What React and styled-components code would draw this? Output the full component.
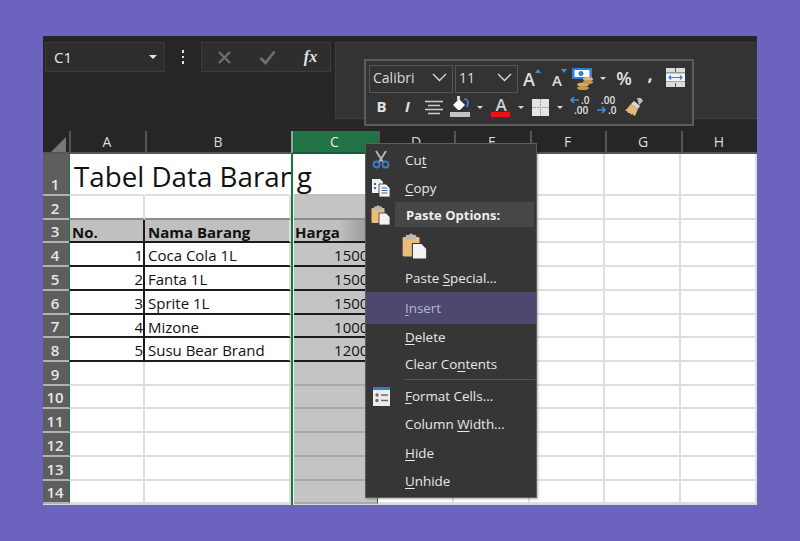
import React from "react";
import styled, { createGlobalStyle } from "styled-components";

const Global = createGlobalStyle`
  html, body { margin: 0; padding: 0; background: #6c63bf; }
  * { box-sizing: border-box; }
`;
const UI = `"Open Sans", "Noto Sans", sans-serif`;

const Page = styled.div`
  width: 800px; height: 541px; padding: 36px 43px; background: #6c63bf; overflow: hidden;
`;
const Window = styled.div`
  position: relative; width: 714px; height: 469px; display: flex; flex-direction: column;
  background: #dcdcdc; font-family: ${UI}; overflow: hidden;
`;
const Ribbon = styled.div`
  height: 95px; flex: none; background: #262626; display: flex; align-items: flex-start; padding: 6px 0 0 2px;
`;
const NameBox = styled.div`
  width: 120px; height: 30px; background: #2d2d2d; border: 1px solid #3c3c3c; display: flex; align-items: center;
  justify-content: space-between; padding: 0 7px 0 8px; color: #e8e8e8; font-size: 15px;
`;
const Caret = styled.span`
  width: 0; height: 0; border-left: ${p => p.$s || 4}px solid transparent; border-right: ${p => p.$s || 4}px solid transparent;
  border-top: ${p => p.$s || 4}px solid ${p => p.$c || "#e6e6e6"}; display: block;
`;
const Kebab = styled.div`
  width: 36px; height: 30px; display: flex; flex-direction: column; align-items: center; justify-content: center; gap: 3px;
  i { width: 2.5px; height: 2.5px; background: #e0e0e0; display: block; }
`;
const FormulaButtons = styled.div`
  width: 130px; height: 30px; background: #2e2e2e; border: 1px solid #3c3c3c; display: grid; grid-template-columns: 44px 43px 43px;
  align-items: center; justify-items: center; color: #ddd;
`;
const Fx = styled.span`
  font-family: "Liberation Serif", serif; font-style: italic; font-weight: 700; font-size: 16px; color: #e4e4e4; line-height: 1;
`;
const FormulaInput = styled.div`
  flex: 1; margin-left: 4px; height: 77px; background: #333; border: 1px solid #3e3e3e; border-right: 0;
`;

const Sheet = styled.div`
  display: grid;
  grid-template-columns: 26px 76px 146px 87px 76px 76px 75px 76px 76px;
  grid-template-rows: 23px 42px 24px 23px 24px 24px 24px 23px 24px 24px 23px 24px 24px 24px 23px;
`;
const Corner = styled.div`
  background: #262626; border-bottom: 2px solid #555; padding: 6px 0 0 8px; 
`;
const ColHead = styled.div`
  background: ${p => p.$sel ? "#217346" : "#262626"};
  border-bottom: 2px solid ${p => p.$sel ? "#17593a" : "#555"};
  border-left: 2px solid ${p => p.$sel ? "#8fa89a" : "#555"};
  color: ${p => p.$sel ? "#e8e8e8" : "#dcdcdc"}; font-size: 14px; display: flex; align-items: center; justify-content: center;
  padding-right: 2px;
`;
const RowHead = styled.div`
  background: #5e5e5e; border-bottom: 2px solid #b2b2b2; color: #e6e6e6; font-size: 15px; font-weight: 600;
  display: flex; align-items: flex-end; justify-content: center; line-height: 20px; padding-right: 2px;
`;
const Cell = styled.div`
  background: ${p => p.$fill || "#fff"};
  border-right: 2px solid ${p => p.$rc || "#dedede"};
  border-bottom: 2px solid ${p => p.$bc || "#dedede"};
  border-left: ${p => p.$first ? "1px solid #107c41" : "0"};
  color: #111; font-size: 15px; line-height: 25px; padding: 0 ${p => p.$num ? "0" : "2px"} 0 ${p => p.$first ? "2px" : "3px"};
  font-weight: ${p => p.$bold ? 700 : 400}; text-align: ${p => p.$num ? "right" : "left"}; white-space: nowrap;
`;
const TitleCell = styled(Cell)`
  position: relative; z-index: 1; background: #fff; border-right-color: #fff;
`;
const SelCell = styled(Cell)`
  box-shadow: inset 3px 0 0 #eee;
  padding-left: 4px; padding-right: 0; border-right: 1px solid #107c41;
  overflow: hidden;
`;
const Title = styled.div`
  font-size: 27.75px; line-height: 44px; color: #111; padding-left: 2px;
`;
const Edge = styled.div`
  position: absolute; z-index: 2; left: 248px; top: 118px; bottom: 0; width: 3px; border-left: 2px solid #107c41; border-right: 1px solid #f4f4f4;
`;
const TitleMask = styled.div`
  position: absolute; z-index: 2; left: 251px; top: 118px; width: 2px; height: 40px; background: #fff;
`;

/* mini toolbar */
const Mini = styled.div`
  position: absolute; z-index: 3; left: 321px; top: 23px; width: 330px; height: 67px; background: #333; border: 2px solid #5c5c5c;
  padding: 3px 0 0 3px; display: flex; flex-direction: column; color: #ddd;
`;
const MiniRow = styled.div`
  display: flex; align-items: center; height: ${p => p.$h}px; padding-bottom: ${p => p.$pb || 0}px;
`;
const Combo = styled.div`
  width: ${p => p.$w}px; height: 28px; margin-right: ${p => p.$mr || 0}px; border: 1px solid #565656; display: flex; align-items: center;
  justify-content: space-between; padding: 0 5px 2px 3px; font-size: 14px; color: #dcdcdc;
`;
const Slot = styled.div`
  width: ${p => p.$w}px; flex: none; display: flex; align-items: center; justify-content: center; line-height: 1;
  padding-bottom: ${p => p.$pb || 0}px;
`;
const Glyph = styled.span`
  font-size: ${p => p.$s || 15}px; font-weight: ${p => p.$w || 700}; font-style: ${p => p.$i ? "italic" : "normal"};
  color: #e2e2e2;
`;

/* menu */
const Menu = styled.div`
  position: absolute; z-index: 3; left: 322px; top: 107px; width: 172px; height: 355px; background: #363636; border: 1px solid #5e5e5e;
  box-shadow: 1px 1px 2px rgba(0,0,0,.3); padding-top: 1px; color: #e8e8e8; font-size: 13.4px;
`;
const Item = styled.div`
  height: ${p => p.$h || 28}px; display: flex; align-items: center; background: ${p => p.$hl ? "#4c4870" : "transparent"};
  color: ${p => p.$hl ? "#b9b7cf" : "#e8e8e8"}; white-space: nowrap;
`;
const Label = styled.span`
  white-space: pre;
`;
const IconSlot = styled.div`
  width: ${p => p.$w || 39}px; flex: none; display: flex; align-items: center; justify-content: center; padding-right: ${p => p.$pr || 0}px;
`;
const PasteHead = styled.div`
  flex: 1; height: 25px; margin-right: 2px; background: #474747; display: flex; align-items: center; padding-left: 11px;
  font-weight: 700; font-size: 13px; color: #eee;
`;
const Sep = styled.div`
  height: 1px; margin: 1px 1px 2px 39px; background: #565656;
`;
const Key = styled.span`
  text-decoration: underline; text-underline-offset: 2px;
`;

/* icons */
const CutIcon = () => (
  <svg width="18" height="19" viewBox="0 0 18 19">
    <path d="M4 1l7 11M14 1L7 12" stroke="#b4b4b4" strokeWidth="2" fill="none" />
    <circle cx="4.500" cy="14.500" r="3" fill="none" stroke="#3f7fc4" strokeWidth="1.800" />
    <circle cx="13.500" cy="14.500" r="3" fill="none" stroke="#3f7fc4" strokeWidth="1.800" />
  </svg>
);
const CopyIcon = () => (
  <svg width="19" height="18" viewBox="0 0 19 18">
    <path d="M0 0h8l3 3v11H0z" fill="#f0f0f0" />
    <path d="M2 4h2v2H2zM2 8h2v2H2z" fill="#2f6fb8" />
    <path d="M7 5h7l4 4v9H7z" fill="#f4f4f4" stroke="#363636" strokeWidth=".8" />
    <path d="M9.500 9h6M9.500 11.500h6M9.500 14h6" stroke="#2f6fb8" strokeWidth="1.200" />
  </svg>
);
const PasteIcon = ({ s = 20 }) => (
  <svg width={s} height={s} viewBox="0 0 20 20">
    <rect x="0.500" y="3" width="13" height="15" rx="1" fill="#e9bd7c" />
    <rect x="3" y="1.500" width="8" height="3.500" fill="#b9b9b9" />
    <circle cx="7" cy="1.800" r="1.500" fill="#b9b9b9" />
    <path d="M8 8h7l4 4v8H8z" fill="#f2f2f2" stroke="#363636" strokeWidth=".8" />
  </svg>
);
const FormatIcon = () => (
  <svg width="17" height="19" viewBox="0 0 17 19">
    <rect width="17" height="19" fill="#ececec" />
    <rect width="17" height="3" fill="#3a7cc8" />
    <circle cx="4" cy="8" r="1.700" fill="#6a6a6a" />
    <circle cx="4" cy="13.500" r="1.700" fill="#6a6a6a" />
    <path d="M8 8h7M8 13.500h7" stroke="#6a6a6a" strokeWidth="1.400" />
  </svg>
);
const XIcon = () => (
  <svg width="15" height="15" viewBox="0 0 15 15"><path d="M2 2l11 11M13 2L2 13" stroke="#6f6f6f" strokeWidth="2.200" /></svg>
);
const CheckIcon = () => (
  <svg width="17" height="15" viewBox="0 0 17 15"><path d="M1.500 8l5 5L15.500 1.500" stroke="#6f6f6f" strokeWidth="2.600" fill="none" /></svg>
);
const Triangle = () => (
  <svg width="15" height="15" viewBox="0 0 15 15" style={{ display: "block" }}><path d="M15 0v15H0z" fill="#767676" /></svg>
);
const Chevron = () => (
  <svg width="15" height="9" viewBox="0 0 15 9"><path d="M1 1l6.500 6.500L14 1" stroke="#d8d8d8" strokeWidth="1.400" fill="none" /></svg>
);
const GrowA = ({ size, up }) => (
  <svg width="24" height="24" viewBox="0 0 24 24">
    <text x={up ? 3 : 6} y="19" fontFamily={UI} fontSize={size} fontWeight="600" fill="#dedede">A</text>
    <path d={up ? "M15 6l3-4 3 4z" : "M15 2h6l-3 4z"} fill="#3f8fd8" />
  </svg>
);
const Currency = () => (
  <svg width="22" height="22" viewBox="0 0 22 22">
    <rect x="0" y="0" width="20" height="11" fill="#2f7fd6" />
    <rect x="2.500" y="2" width="15" height="7" fill="#fff" />
    <circle cx="9" cy="5.500" r="2.500" fill="#2f7fd6" />
    <ellipse cx="11" cy="16.500" rx="6" ry="2" fill="#d9a860" />
    <ellipse cx="11" cy="20" rx="6" ry="2" fill="#c89850" />
    <ellipse cx="16" cy="11" rx="5" ry="2" fill="#e4b670" />
    <ellipse cx="16" cy="14" rx="5" ry="2" fill="#c89850" />
  </svg>
);
const Wrap = () => (
  <svg width="19" height="19" viewBox="0 0 19 19">
    <rect width="19" height="19" fill="#dcdcdc" />
    <path d="M0 5h19M0 13.500h19M9.500 0v4M9.500 15v4" stroke="#555" strokeWidth="1" />
    <rect x="0" y="5.500" width="19" height="8" fill="#f4f4f4" />
    <path d="M3 9.500h13M5 7.500l-2 2 2 2M14 7.500l2 2-2 2" stroke="#2f7fd6" strokeWidth="1.200" fill="none" />
  </svg>
);
const AlignIcon = () => (
  <svg width="18" height="15" viewBox="0 0 18 15"><path d="M0 1.500h18M3 5.500h12M0 9.500h18M3 13.500h12" stroke="#cfcfcf" strokeWidth="1.400" /></svg>
);
const FillIcon = () => (
  <svg width="20" height="22" viewBox="0 0 20 22">
    <path d="M3 9l6-6 6 6-5 5H8z" fill="#fff" />
    <path d="M7 0h3v4H7z" fill="#d8d8d8" />
    <path d="M14 3c3 0 4 2 4 4 0 2-1 3-1 4" stroke="#3f8fd8" strokeWidth="1.600" fill="none" />
    <rect x="0" y="16" width="20" height="5" fill="#c4c4c4" />
  </svg>
);
const FontColor = () => (
  <svg width="20" height="28" viewBox="0 -6 20 28">
    <text x="10" y="15" textAnchor="middle" fontFamily={UI} fontSize="17" fontWeight="600" fill="#cfcfcf">A</text>
    <rect x="0" y="16" width="19" height="5" fill="#ee0f1a" />
  </svg>
);
const Borders = () => (
  <svg width="17" height="17" viewBox="0 0 17 17">
    <rect width="17" height="17" fill="#e4e4e4" />
    <path d="M8.500 0v17M0 8.500h17" stroke="#8c8c8c" strokeWidth="1" strokeDasharray="1.500 1" />
  </svg>
);
const DecInc = () => (
  <svg width="24" height="26" viewBox="0 0 24 26">
    <path d="M10 8H2M5 5L2 8l3 3" stroke="#3f8fd8" strokeWidth="1.700" fill="none" />
    <text x="12" y="12" fontFamily={UI} fontSize="10" fontWeight="600" fill="#e0e0e0">.0</text>
    <text x="5" y="22" fontFamily={UI} fontSize="10" fontWeight="600" fill="#e0e0e0">.00</text>
  </svg>
);
const DecDec = () => (
  <svg width="24" height="26" viewBox="0 0 24 26">
    <text x="5" y="12" fontFamily={UI} fontSize="10" fontWeight="600" fill="#e0e0e0">.00</text>
    <path d="M1 18h8M6 15l3 3-3 3" stroke="#3f8fd8" strokeWidth="1.700" fill="none" />
    <text x="12" y="22" fontFamily={UI} fontSize="10" fontWeight="600" fill="#e0e0e0">.0</text>
  </svg>
);
const Brush = () => (
  <svg width="20" height="20" viewBox="0 0 20 20">
    <path d="M13 1l4-0 2 3-4 4z" fill="#bdbdbd" />
    <path d="M10 4l6 5-2 3-7-5z" fill="#d8d8d8" />
    <path d="M7 7l7 5-3 7-3-2-1 1-1-2-2 0-1-2-2 0z" fill="#e6b878" />
  </svg>
);

const columns = ["A", "B", "C", "D", "E", "F", "G", "H"];
const rows = [
  [1, "Coca Cola 1L", "15000"],
  [2, "Fanta 1L", "15000"],
  [3, "Sprite 1L", "15000"],
  [4, "Mizone", "10000"],
  [5, "Susu Bear Brand", "12000"],
];
const DARK = "#1c1c1c";

function Blanks({ row }) {
  return ["D", "E", "F", "G", "H"].map(c => <Cell key={c + row} />);
}

function Empty({ row, bc }) {
  return (
    <React.Fragment>
      <RowHead>{row}</RowHead>
      <Cell $first $bc={bc} />
      <Cell $bc={bc} />
      <SelCell $fill="#c4c4c4" $bc={bc || "#a8a8a8"} />
      <Blanks row={row} />
    </React.Fragment>
  );
}

export default function App() {
  return (
    <Page>
      <Global />
      <Window>
        <Ribbon>
          <NameBox>C1<Caret $s={4} /></NameBox>
          <Kebab><i /><i /><i /></Kebab>
          <FormulaButtons><XIcon /><CheckIcon /><Fx>fx</Fx></FormulaButtons>
          <FormulaInput />
        </Ribbon>
        <Sheet>
          <Corner><Triangle /></Corner>
          {columns.map(c => <ColHead key={c} $sel={c === "C"}>{c}</ColHead>)}

          <RowHead>1</RowHead>
          <TitleCell $first><Title>Tabel Data Barang</Title></TitleCell>
          <Cell $rc="#fff" />
          <Cell $bc="#c0c0c0" />
          <Blanks row={1} />

          <Empty row={2} bc="#8c8c8c" />

          <RowHead>3</RowHead>
          <Cell $first $bold $fill="#c0c0c0" $rc={DARK} $bc={DARK}>No.</Cell>
          <Cell $bold $fill="#c0c0c0" $bc={DARK}>Nama Barang</Cell>
          <SelCell $bold $fill="linear-gradient(90deg,#c0c0c0 55%,#8e8e8e)" $bc={DARK}>Harga</SelCell>
          <Blanks row={3} />

          {rows.map(([n, name, price], i) => (
            <React.Fragment key={n}>
              <RowHead>{i + 4}</RowHead>
              <Cell $first $num $rc={DARK} $bc={DARK}>{n}</Cell>
              <Cell $bc={DARK}>{name}</Cell>
              <SelCell $num $fill="#c4c4c4" $bc={DARK}>{price}</SelCell>
              <Blanks row={i + 4} />
            </React.Fragment>
          ))}

          {[9, 10, 11, 12, 13, 14].map(r => <Empty key={r} row={r} />)}
        </Sheet>

        <Edge />
        <TitleMask />

        <Mini>
          <MiniRow $h={29}>
            <Combo $w={84} $mr={2}>Calibri<Chevron /></Combo>
            <Combo $w={63}>11<Chevron /></Combo>
            <Slot $w={27}><GrowA size={18} up /></Slot>
            <Slot $w={26}><GrowA size={15} /></Slot>
            <Slot $w={24}><Currency /></Slot>
            <Slot $w={16}><Caret $s={3.500} $c="#d8d8d8" /></Slot>
            <Slot $w={26} $pb={2}><Glyph $s={18} $w={600}>%</Glyph></Slot>
            <Slot $w={26} $pb={10}><Glyph $s={18}>,</Glyph></Slot>
            <Slot $w={24} $pb={2}><Wrap /></Slot>
          </MiniRow>
          <MiniRow $h={30} $pb={2}>
            <Slot $w={25} $pb={2}><Glyph $s={15}>B</Glyph></Slot>
            <Slot $w={27} $pb={2}><Glyph $s={15} $i>I</Glyph></Slot>
            <Slot $w={26}><AlignIcon /></Slot>
            <Slot $w={26}><FillIcon /></Slot>
            <Slot $w={14}><Caret $s={3.500} $c="#d8d8d8" /></Slot>
            <Slot $w={27} $pb={6}><FontColor /></Slot>
            <Slot $w={13}><Caret $s={3.500} $c="#d8d8d8" /></Slot>
            <Slot $w={26}><Borders /></Slot>
            <Slot $w={14}><Caret $s={3.500} $c="#d8d8d8" /></Slot>
            <Slot $w={27} $pb={4}><DecInc /></Slot>
            <Slot $w={27} $pb={4}><DecDec /></Slot>
            <Slot $w={26}><Brush /></Slot>
          </MiniRow>
        </Mini>

        <Menu>
          <Item $h={29}><IconSlot $pr={9}><CutIcon /></IconSlot><Label>Cu<Key>t</Key></Label></Item>
          <Item $h={28}><IconSlot $pr={9}><CopyIcon /></IconSlot><Label><Key>C</Key>opy</Label></Item>
          <Item $h={25}><IconSlot $w={29}><PasteIcon /></IconSlot><PasteHead>Paste Options:</PasteHead></Item>
          <Item $h={37}><IconSlot $w={36} /><PasteIcon s={26} /></Item>
          <Item $h={28}><IconSlot /><Label>Paste <Key>S</Key>pecial...</Label></Item>
          <Item $h={32} $hl><IconSlot /><Label><Key>I</Key>nsert</Label></Item>
          <Item $h={26}><IconSlot /><Label><Key>D</Key>elete</Label></Item>
          <Item $h={28}><IconSlot /><Label>Clear Co<Key>n</Key>tents</Label></Item>
          <Sep />
          <Item $h={28}><IconSlot $pr={9}><FormatIcon /></IconSlot><Label><Key>F</Key>ormat Cells...</Label></Item>
          <Item $h={28}><IconSlot /><Label>Column <Key>W</Key>idth...</Label></Item>
          <Item $h={29}><IconSlot /><Label><Key>H</Key>ide</Label></Item>
          <Item $h={28}><IconSlot /><Label><Key>U</Key>nhide</Label></Item>
        </Menu>
      </Window>
    </Page>
  );
}
